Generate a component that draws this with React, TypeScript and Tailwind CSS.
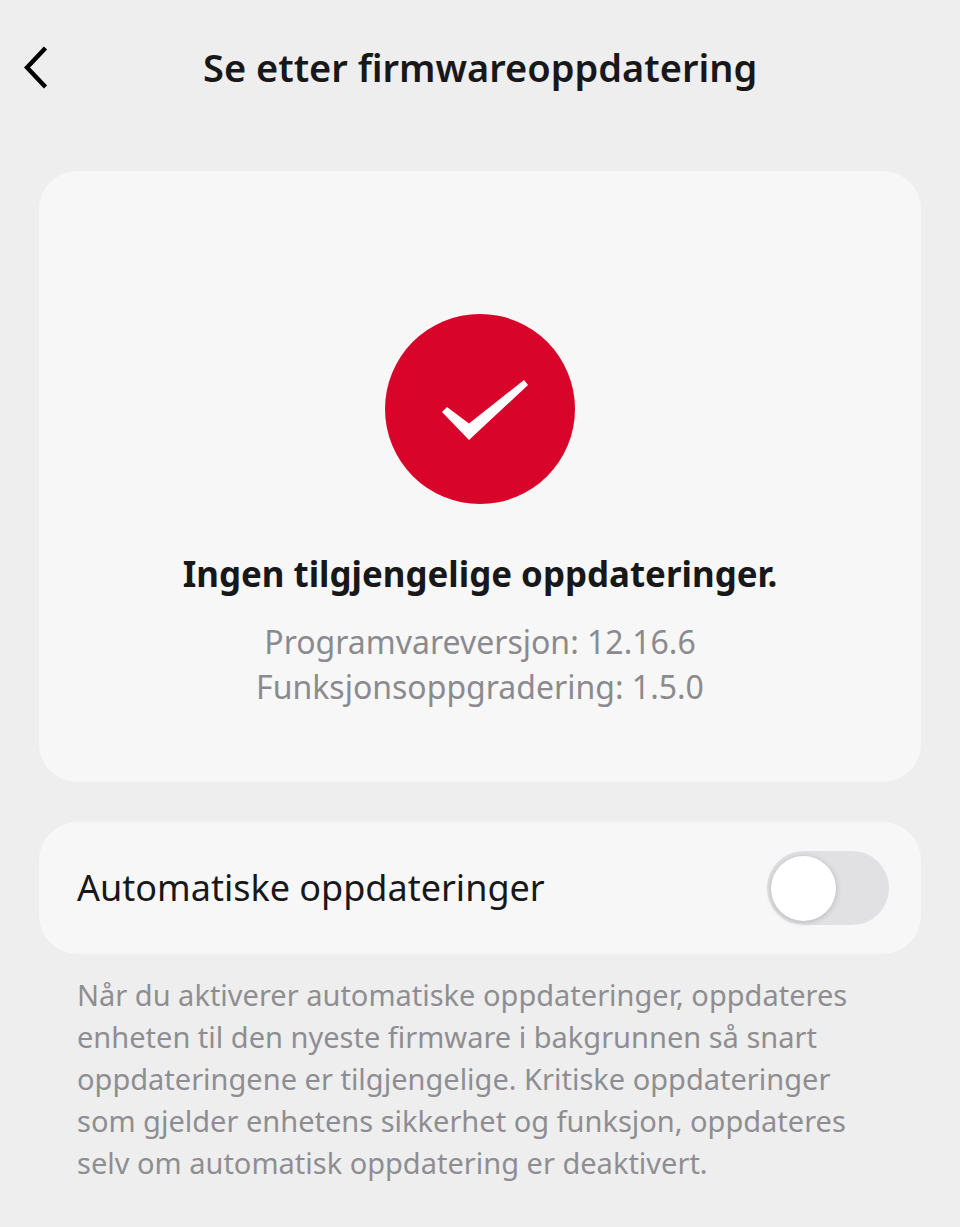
import React from 'react';

const App: React.FC = () => {
    return (
        <div className="min-h-[1227px] w-[960px] overflow-hidden bg-[#eeeeee] font-['Noto_Sans',sans-serif]">
            {/* Header */}
            <header className="flex h-[171px] items-start px-6 pt-[46px]">
                <svg width="24" height="44" viewBox="0 0 24 44" fill="none" className="shrink-0">
                    <path d="M21.5 2 L3 21.5 L21.5 41" stroke="#000" strokeWidth="4.5" />
                </svg>
                <h1 className="ml-[155px] text-[38px] leading-[43px] font-semibold whitespace-nowrap text-[#18181a]">
                    Se etter firmwareoppdatering
                </h1>
            </header>

            <main className="flex flex-col px-[39px]">
                {/* Status card */}
                <section className="flex h-[611px] flex-col items-center rounded-[38px] bg-[#f7f7f8] pt-[143px]">
                    <div className="flex size-[190px] items-center justify-center rounded-full bg-[#d90429]">
                        <svg width="190" height="190" viewBox="0 0 190 190">
                            <path d="M57 98 L62 93 L84 109.5 L139 66 L143 71 L84 126 Z" fill="#fff" />
                        </svg>
                    </div>
                    <h2 className="mt-[46px] text-[34.9px] leading-[48px] font-bold whitespace-nowrap text-[#18181a]">
                        Ingen tilgjengelige oppdateringer.
                    </h2>
                    <div className="mt-[21px] text-center text-[32px] leading-[46px] text-[#8b8b8f]">
                        <p>Programvareversjon: 12.16.6</p>
                        <p className="-mt-px">Funksjonsoppgradering: 1.5.0</p>
                    </div>
                </section>

                {/* Auto update toggle */}
                <section className="mt-[40px] flex h-[132px] items-center justify-between rounded-[38px] bg-[#f7f7f8] pr-[32px] pl-[38px]">
                    <span className="text-[36px] leading-[48px] text-[#18181a]">Automatiske oppdateringer</span>
                    <div className="flex h-[74px] w-[122px] items-center rounded-full bg-[#e1e1e4] pl-[4px]">
                        <div className="size-[65px] rounded-full bg-white shadow-[0_1px_6px_rgba(0,0,0,0.2)]" />
                    </div>
                </section>

                <p className="mt-[20px] pr-[40px] pl-[38px] text-[29px] leading-[42px] text-[#8e8e92]">
                    Når du aktiverer automatiske oppdateringer, oppdateres enheten til den nyeste firmware i bakgrunnen så snart oppdateringene er tilgjengelige. Kritiske oppdateringer som gjelder enhetens sikkerhet og funksjon, oppdateres selv om automatisk oppdatering er deaktivert.
                </p>
            </main>
        </div>
    );
};

export default App;
